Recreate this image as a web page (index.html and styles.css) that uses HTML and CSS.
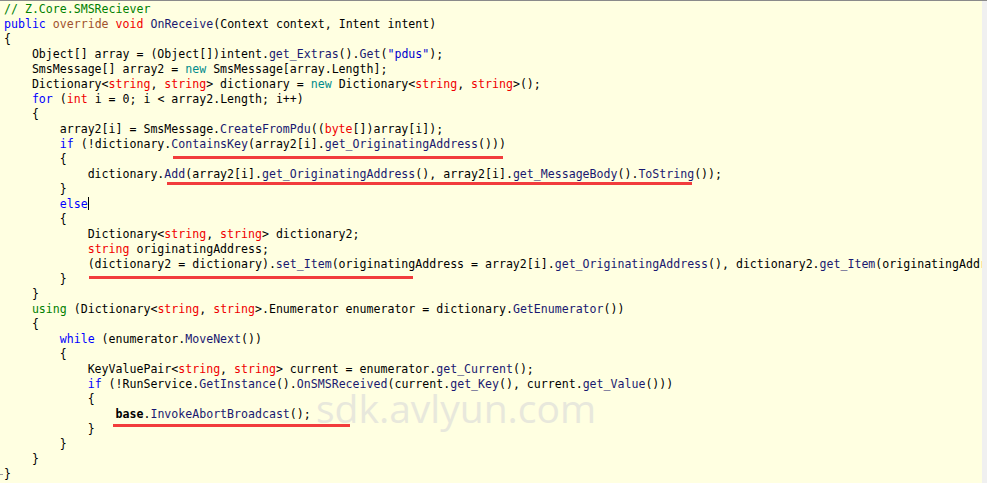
FILE: index.html
```html
<!DOCTYPE html>
<html>
<head>
<meta charset="utf-8">
<link rel="stylesheet" href="styles.css">
</head>
<body>
<div class="screen">
  <div class="editor">
<pre class="code"><span class="c">// Z.Core.SMSReciever</span>
<span class="k">public</span> <span class="m">override</span> <span class="t">void</span> <span class="f">OnReceive</span>(Context context, Intent intent)
{
    Object[] array = (Object[])intent.<span class="f">get_Extras</span>().<span class="f">Get</span>(<span class="s">"pdus"</span>);
    SmsMessage[] array2 = <span class="n">new</span> SmsMessage[array.Length];
    Dictionary&lt;<span class="t">string</span>, <span class="t">string</span>&gt; dictionary = <span class="n">new</span> Dictionary&lt;<span class="t">string</span>, <span class="t">string</span>&gt;();
    <span class="k">for</span> (<span class="t">int</span> i = 0; i &lt; array2.Length; i++)
    {
        array2[i] = SmsMessage.<span class="f">CreateFromPdu</span>((<span class="t">byte</span>[])array[i]);
        <span class="k">if</span> (!dictionary.<span class="f">ContainsKey</span>(array2[i].<span class="f">get_OriginatingAddress</span>()))
        {
            dictionary.<span class="f">Add</span>(array2[i].<span class="f">get_OriginatingAddress</span>(), array2[i].<span class="f">get_MessageBody</span>().<span class="f">ToString</span>());
        }
        <span class="k">else</span><span class="caret"></span>
        {
            Dictionary&lt;<span class="t">string</span>, <span class="t">string</span>&gt; dictionary2;
            <span class="t">string</span> originatingAddress;
            (dictionary2 = dictionary).<span class="f">set_Item</span>(originatingAddress = array2[i].<span class="f">get_OriginatingAddress</span>(), dictionary2.<span class="f">get_Item</span>(originatingAddress));
        }
    }
    <span class="g">using</span> (Dictionary&lt;<span class="t">string</span>, <span class="t">string</span>&gt;.Enumerator enumerator = dictionary.<span class="f">GetEnumerator</span>())
    {
        <span class="k">while</span> (enumerator.<span class="f">MoveNext</span>())
        {
            KeyValuePair&lt;<span class="t">string</span>, <span class="t">string</span>&gt; current = enumerator.<span class="f">get_Current</span>();
            <span class="k">if</span> (!RunService.<span class="f">GetInstance</span>().<span class="f">OnSMSReceived</span>(current.<span class="f">get_Key</span>(), current.<span class="f">get_Value</span>()))
            {
                <span class="b">base</span>.<span class="f">InvokeAbortBroadcast</span>();
            }
        }
    }
<span class="fold"></span>}</pre>
    <div class="mark mark-1"></div>
    <div class="mark mark-2"></div>
    <div class="mark mark-3"></div>
    <div class="mark mark-4"></div>
    <div class="watermark">sdk.avlyun.com</div>
  </div>
  <div class="strip"></div>
</div>
</body>
</html>
```
FILE: styles.css
```css
html, body {
  margin: 0;
  padding: 0;
  width: 987px;
  height: 483px;
  overflow: hidden;
  background: #ffffe1;
}

.screen {
  display: flex;
  width: 987px;
  height: 483px;
  border-top: 1px solid #8a8a8a;
  box-sizing: border-box;
}

.editor {
  position: relative;
  flex: 1;
  background: #ffffe1;
  overflow: hidden;
}

.strip {
  width: 5px;
  background: #f0f0f0;
}

.code {
  margin: 0;
  padding: 1px 0 0 4px;
  font-family: "DejaVu Sans Mono", "Liberation Mono", monospace;
  font-size: 11.58px;
  line-height: 15px;
  color: #000;
  white-space: pre;
}

.c { color: #008000; }
.k { color: #0000ff; }
.m { color: #a0522d; }
.t { color: #f00000; }
.n { color: #008b8b; }
.g { color: #008000; }
.f { color: #191970; }
.s { color: #0000cd; }
.b { font-weight: bold; color: #000; }

.caret {
  display: inline-block;
  width: 1px;
  height: 13px;
  background: #000;
  vertical-align: -2px;
}

.fold {
  display: inline-block;
  width: 3px;
  height: 1px;
  background: #9a9a9a;
  margin-left: -4px;
  margin-right: 1px;
  vertical-align: middle;
}

.mark {
  position: absolute;
  height: 3px;
  background: #f23c3c;
}
.mark-1 { left: 173px; top: 155px; width: 330px; }
.mark-2 { left: 167px; top: 181px; width: 525px; }
.mark-3 { left: 89px; top: 275px; width: 324px; }
.mark-4 { left: 113px; top: 423px; width: 237px; }

.watermark {
  position: absolute;
  left: 316px;
  top: 387px;
  font-family: "Open Sans", "Liberation Sans", sans-serif;
  font-weight: 400;
  font-size: 39px;
  line-height: 1;
  color: #e8e8dc;
  pointer-events: none;
}
```
